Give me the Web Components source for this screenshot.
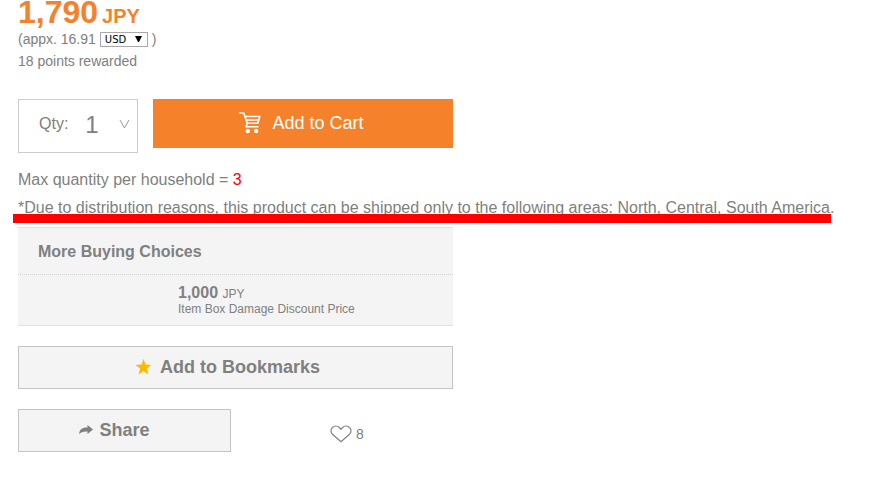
<!DOCTYPE html>
<html lang="en">
<head>
<meta charset="utf-8">
<meta name="viewport" content="width=device-width, initial-scale=1">
<title>Product purchase</title>
<style>
  body { margin: 0; background: #fff; color: #808080; font-family: "Liberation Sans", Arial, sans-serif; font-size: 14px; }
</style>
</head>
<body>
<purchase-panel></purchase-panel>
<script>
const define = (name, html) => {
  const template = document.createElement('template');
  template.innerHTML = html;
  customElements.define(name, class extends HTMLElement {
    constructor() {
      super();
      this.attachShadow({ mode: 'open' }).append(template.content.cloneNode(true));
    }
  });
};

define('product-price', `
<style>
  :host { display: block; }
  p { margin: 0; line-height: 22px; }
  .price { color: #f5822a; font-size: 32px; font-weight: bold; line-height: 24px; padding-bottom: 4px; }
  .price small { font-size: 20px; line-height: 0; margin-left: 4px; }
  .approx { display: flex; align-items: center; gap: 4px; height: 22px; }
  .currency { display: inline-grid; align-items: center; }
  select, svg { grid-area: 1 / 1; }
  select { appearance: none; box-sizing: border-box; width: 48px; height: 15px; margin: 1px 0 0; padding: 0 0 0 4px;
    border: 1px solid #a9a9a9; border-radius: 0; background: #fff; color: #000; font: 10px/13px "DejaVu Sans", sans-serif; }
  svg { justify-self: end; margin-right: 6px; pointer-events: none; }
</style>
<p class="price">1,790<small>JPY</small></p>
<div class="approx"><span>(appx. 16.91</span>
  <span class="currency"><select aria-label="Currency"><option>USD</option><option>EUR</option></select>
  <svg width="7" height="6" viewBox="0 0 7 6" aria-hidden="true"><path d="M0 0H7L4 6H3Z"/></svg></span>
  <span>)</span></div>
<p>18 points rewarded</p>`);

define('quantity-picker', `
<style>
  :host { display: block; box-sizing: border-box; border: 1px solid #ccc; }
  .field { display: grid; grid-template-columns: auto 1fr; align-items: center; height: 48px; padding-left: 20px; font-size: 16px; }
  select, svg { grid-area: 1 / 2; }
  select { appearance: none; width: 100%; height: 48px; margin: 0; padding: 0 0 0 17px; border: 0; background: transparent; color: inherit; font: 24px "Liberation Sans", Arial, sans-serif; }
  svg { justify-self: end; margin-right: 7px; pointer-events: none; }
</style>
<div class="field"><label for="qty">Qty:</label>
<select id="qty"><option>1</option><option>2</option><option>3</option></select>
<svg width="11" height="10" viewBox="0 0 11 10" fill="none" stroke="#999" aria-hidden="true"><path d="M1 1L5.500 9L10 1"/></svg></div>`);

define('cart-button', `
<style>
  :host { display: block; }
  button { display: flex; align-items: center; justify-content: center; gap: 10px; width: 100%; height: 49px; padding: 0 3px 0 0;
    border: 0; background: #f5822a; color: #fff; font: 18px "Liberation Sans", Arial, sans-serif; cursor: pointer; }
</style>
<button type="button"><slot name="icon"></slot><slot></slot></button>`);

define('outline-button', `
<style>
  :host { display: block; }
  button { display: flex; align-items: center; justify-content: center; gap: var(--gap, 8px); box-sizing: border-box; width: 100%; height: 43px; padding: 0 var(--end, 16px) 0 0;
    border: 1px solid #c4c4c4; background: #f4f4f4; color: inherit; font: bold 18px "Liberation Sans", Arial, sans-serif; cursor: pointer; }
</style>
<button type="button"><slot name="icon"></slot><slot></slot></button>`);

define('shipping-notes', `
<style>
  :host { display: block; font-size: 16px; line-height: 28px; }
  p { margin: 0; }
  em { color: #f00; font-style: normal; }
  .area { position: relative; width: fit-content; }
  .area::after { content: ""; position: absolute; left: -5px; right: 3px; top: 20px; height: 9px; background: #f00; }
</style>
<p>Max quantity per household = <em>3</em></p>
<p class="area">*Due to distribution reasons, this product can be shipped only to the following areas: North, Central, South America.</p>`);

define('buying-choices', `
<style>
  :host { display: block; background: #f4f4f4; border: solid #e2e2e2; border-width: 1px 0; }
  h2 { margin: 0; padding: 2px 0 0 20px; font-size: 16px; line-height: 44px; border-bottom: 1px dotted #d2d2d2; }
  .choice { padding: 10px 0 8px 160px; font-size: 12px; line-height: 16px; }
  p { margin: 0; }
  .cost { font-size: 16px; }
  .cost small { font-size: 12px; line-height: 0; }
</style>
<h2>More Buying Choices</h2>
<div class="choice"><p class="cost"><b>1,000</b> <small>JPY</small></p><p>Item Box Damage Discount Price</p></div>`);

define('like-button', `
<style>
  :host { display: block; }
  button { display: flex; align-items: center; gap: 4px; padding: 0; border: 0; background: none; color: inherit; font: 14px "Liberation Sans", Arial, sans-serif; cursor: pointer; }
</style>
<button type="button" aria-label="Like, 8"><svg width="22" height="18" viewBox="0 0 22 18" fill="none" stroke="#808080" stroke-width="1.200" aria-hidden="true"><path d="M11 16.800L2.500 9.300C.5 7.500.5 4.200 2.500 2.500C4.500.6 7.500.6 9.400 2.500L11 4.300L12.600 2.500C14.500.6 17.500.6 19.500 2.500C21.500 4.200 21.500 7.500 19.500 9.300Z"/></svg><span><slot></slot></span></button>`);

define('purchase-panel', `
<style>
  :host { display: block; padding: 0 18px 32px; }
  .column { max-width: 435px; }
  .buy { display: grid; grid-template-columns: 2fr 5fr; gap: 15px; align-items: start; margin-top: 27px; }
  quantity-picker { height: 54px; }
  shipping-notes { margin-top: 13px; }
  buying-choices { margin-top: 5px; }
  .bookmark { margin-top: 20px; }
  .bookmark svg, .share svg { margin-bottom: 2px; }
  .social { display: grid; grid-template-columns: 1fr 1fr; gap: 9px; align-items: center; margin-top: 20px; }
  like-button { padding: 6px 0 0 90px; }
  .share { --gap: 6px; --end: 20px; }
</style>
<product-price></product-price>
<div class="column buy">
  <quantity-picker></quantity-picker>
  <cart-button><svg slot="icon" width="23" height="23" viewBox="0 0 23 23" fill="none" stroke="#fff" stroke-width="1.600" stroke-linejoin="round" aria-hidden="true"><path d="M0 1H4.800L8.200 11.300H18.800L20.800 4.500H6M7 8H19.500M8.200 11.300L7 14.800H19.500"/><circle cx="8.800" cy="19" r="2.200" fill="#fff" stroke="none"/><circle cx="17.200" cy="19" r="2.200" fill="#fff" stroke="none"/></svg>Add to Cart</cart-button>
</div>
<shipping-notes></shipping-notes>
<div class="column">
  <buying-choices></buying-choices>
  <outline-button class="bookmark"><svg slot="icon" width="17" height="16" viewBox="0 0 17 16" fill="#ffba00" aria-hidden="true"><path d="M8.500 0L10.600 5.600L16.500 5.900L11.900 9.600L13.500 15.500L8.500 12.200L3.500 15.500L5.100 9.600L.5 5.900L6.400 5.600Z"/></svg>Add to Bookmarks</outline-button>
  <div class="social">
    <outline-button class="share"><svg slot="icon" width="14" height="10" viewBox="0 0 14 10" fill="#808080" aria-hidden="true"><path d="M8.500 0L14 4.600L8.500 9V6.500C5 6.100 2 6.800.3 9.200C0 5 3 2.300 8.500 2.500Z"/></svg>Share</outline-button>
    <like-button>8</like-button>
  </div>
</div>`);
</script>
</body>
</html>
